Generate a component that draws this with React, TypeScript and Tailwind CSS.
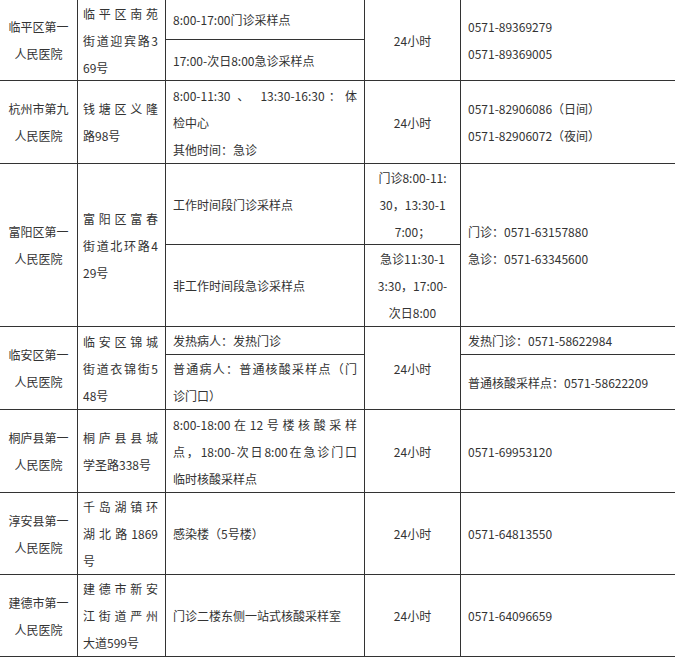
import React from "react";

type CellProps = {
  pos: string;
  align?: "left" | "center";
  pad?: string;
  children: React.ReactNode;
};

function Cell({ pos, align = "left", pad = "px-[7px]", children }: CellProps) {
  return (
    <div
      className={
        "bg-white flex flex-col justify-center " +
        pos +
        " " +
        pad +
        (align === "center" ? " text-center" : " text-left")
      }
    >
      {children}
    </div>
  );
}

function J({ children }: { children: React.ReactNode }) {
  return <div className="text-justify [text-align-last:justify] whitespace-nowrap">{children}</div>;
}

function Ln({ children }: { children: React.ReactNode }) {
  return <div className="whitespace-nowrap">{children}</div>;
}

function Name({ pos, a }: { pos: string; a: string }) {
  return (
    <Cell pos={pos} align="center" pad="px-0">
      <Ln>{a}</Ln>
      <Ln>人民医院</Ln>
    </Cell>
  );
}

export default function App() {
  return (
    <div className="w-[675px] h-[658px] overflow-hidden bg-white">
      <div className="-ml-px -mt-px w-max bg-[#333] p-px grid gap-px grid-cols-[77px_87px_198px_95px_214px] grid-rows-[39px_40px_82px_80px_81px_27px_54px_82px_81px_81px] text-[12px] leading-[27px] text-[#333] font-['Noto_Sans_CJK_SC','Noto_Sans',sans-serif]">
        {/* Row 1 */}
        <Name pos="col-start-1 row-start-1 row-span-2" a="临平区第一" />
        <Cell pos="col-start-2 row-start-1 row-span-2" pad="pl-[5px] pr-[7px]">
          <J>临平区南苑</J>
          <J>街道迎宾路3</J>
          <Ln>69号</Ln>
        </Cell>
        <Cell pos="col-start-3 row-start-1">
          <Ln>8:00-17:00门诊采样点</Ln>
        </Cell>
        <Cell pos="col-start-3 row-start-2">
          <Ln>17:00-次日8:00急诊采样点</Ln>
        </Cell>
        <Cell pos="col-start-4 row-start-1 row-span-2" align="center" pad="px-0">
          <Ln>24小时</Ln>
        </Cell>
        <Cell pos="col-start-5 row-start-1 row-span-2">
          <Ln>0571-89369279</Ln>
          <Ln>0571-89369005</Ln>
        </Cell>

        {/* Row 2 */}
        <Name pos="col-start-1 row-start-3" a="杭州市第九" />
        <Cell pos="col-start-2 row-start-3" pad="pl-[5px] pr-[7px]">
          <J>钱塘区义隆</J>
          <Ln>路98号</Ln>
        </Cell>
        <Cell pos="col-start-3 row-start-3">
          <J>8:00-11:30 、 13:30-16:30：体</J>
          <Ln>检中心</Ln>
          <Ln>其他时间：急诊</Ln>
        </Cell>
        <Cell pos="col-start-4 row-start-3" align="center" pad="px-0">
          <Ln>24小时</Ln>
        </Cell>
        <Cell pos="col-start-5 row-start-3">
          <Ln>0571-82906086（日间）</Ln>
          <Ln>0571-82906072（夜间）</Ln>
        </Cell>

        {/* Row 3 */}
        <Name pos="col-start-1 row-start-4 row-span-2" a="富阳区第一" />
        <Cell pos="col-start-2 row-start-4 row-span-2" pad="pl-[5px] pr-[7px]">
          <J>富阳区富春</J>
          <J>街道北环路4</J>
          <Ln>29号</Ln>
        </Cell>
        <Cell pos="col-start-3 row-start-4">
          <Ln>工作时间段门诊采样点</Ln>
        </Cell>
        <Cell pos="col-start-3 row-start-5">
          <Ln>非工作时间段急诊采样点</Ln>
        </Cell>
        <Cell pos="col-start-4 row-start-4" align="center" pad="px-0">
          <Ln>门诊8:00-11:</Ln>
          <Ln>30，13:30-1</Ln>
          <Ln>7:00；</Ln>
        </Cell>
        <Cell pos="col-start-4 row-start-5" align="center" pad="px-0">
          <Ln>急诊11:30-1</Ln>
          <Ln>3:30，17:00-</Ln>
          <Ln>次日8:00</Ln>
        </Cell>
        <Cell pos="col-start-5 row-start-4 row-span-2">
          <Ln>门诊：0571-63157880</Ln>
          <Ln>急诊：0571-63345600</Ln>
        </Cell>

        {/* Row 4 */}
        <Name pos="col-start-1 row-start-6 row-span-2" a="临安区第一" />
        <Cell pos="col-start-2 row-start-6 row-span-2" pad="pl-[5px] pr-[7px]">
          <J>临安区锦城</J>
          <J>街道衣锦街5</J>
          <Ln>48号</Ln>
        </Cell>
        <Cell pos="col-start-3 row-start-6">
          <Ln>发热病人：发热门诊</Ln>
        </Cell>
        <Cell pos="col-start-3 row-start-7">
          <J>普通病人：普通核酸采样点（门</J>
          <Ln>诊门口）</Ln>
        </Cell>
        <Cell pos="col-start-4 row-start-6 row-span-2" align="center" pad="px-0">
          <Ln>24小时</Ln>
        </Cell>
        <Cell pos="col-start-5 row-start-6">
          <Ln>发热门诊：0571-58622984</Ln>
        </Cell>
        <Cell pos="col-start-5 row-start-7">
          <Ln>普通核酸采样点：0571-58622209</Ln>
        </Cell>

        {/* Row 5 */}
        <Name pos="col-start-1 row-start-8" a="桐庐县第一" />
        <Cell pos="col-start-2 row-start-8" pad="pl-[5px] pr-[7px]">
          <J>桐庐县县城</J>
          <Ln>学圣路338号</Ln>
        </Cell>
        <Cell pos="col-start-3 row-start-8">
          <J>8:00-18:00在12号楼核酸采样</J>
          <J>点，18:00-次日8:00在急诊门口</J>
          <Ln>临时核酸采样点</Ln>
        </Cell>
        <Cell pos="col-start-4 row-start-8" align="center" pad="px-0">
          <Ln>24小时</Ln>
        </Cell>
        <Cell pos="col-start-5 row-start-8">
          <Ln>0571-69953120</Ln>
        </Cell>

        {/* Row 6 */}
        <Name pos="col-start-1 row-start-9" a="淳安县第一" />
        <Cell pos="col-start-2 row-start-9" pad="pl-[5px] pr-[7px]">
          <J>千岛湖镇环</J>
          <J>湖北路1869</J>
          <Ln>号</Ln>
        </Cell>
        <Cell pos="col-start-3 row-start-9">
          <Ln>感染楼（5号楼）</Ln>
        </Cell>
        <Cell pos="col-start-4 row-start-9" align="center" pad="px-0">
          <Ln>24小时</Ln>
        </Cell>
        <Cell pos="col-start-5 row-start-9">
          <Ln>0571-64813550</Ln>
        </Cell>

        {/* Row 7 */}
        <Name pos="col-start-1 row-start-10" a="建德市第一" />
        <Cell pos="col-start-2 row-start-10" pad="pl-[5px] pr-[7px]">
          <J>建德市新安</J>
          <J>江街道严州</J>
          <Ln>大道599号</Ln>
        </Cell>
        <Cell pos="col-start-3 row-start-10">
          <Ln>门诊二楼东侧一站式核酸采样室</Ln>
        </Cell>
        <Cell pos="col-start-4 row-start-10" align="center" pad="px-0">
          <Ln>24小时</Ln>
        </Cell>
        <Cell pos="col-start-5 row-start-10">
          <Ln>0571-64096659</Ln>
        </Cell>
      </div>
    </div>
  );
}
